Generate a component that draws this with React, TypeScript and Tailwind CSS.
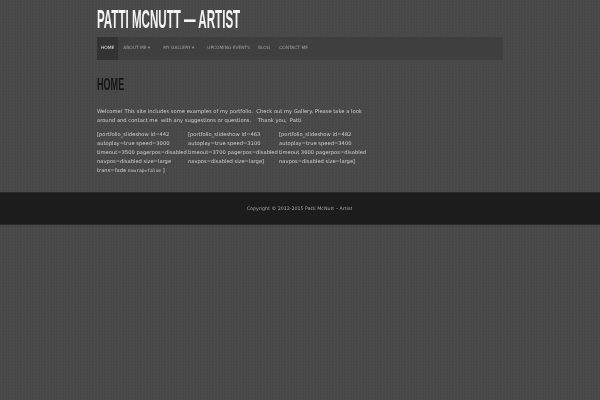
const cols = [
  ["[portfolio_slideshow id=442", "autoplay=true speed=3000", "timeout=3500 pagerpos=disabled", "navpos=disabled size=large"],
  ["[portfolio_slideshow id=463", "autoplay=true speed=3100", "timeout=3700 pagerpos=disabled", "navpos=disabled size=large]"],
  ["[portfolio_slideshow id=482", "autoplay=true speed=3400", "timeout 3600 pagerpos=disabled", "navpos=disabled size=large]"],
];

const nav = [
  { t: "HOME", c: "pl-[4px] pr-[4px]", active: true },
  { t: "ABOUT ME ▾", c: "ml-[5px] mr-[13px]" },
  { t: "MY GALLERY ▾", c: "mr-[13px]" },
  { t: "UPCOMING EVENTS", c: "mr-[8px]" },
  { t: "BLOG", c: "mr-[9px]" },
  { t: "CONTACT ME", c: "" },
];

export default function App() {
  return (
    <div className="h-[400px] w-[600px] overflow-hidden bg-[#484848] bg-[repeating-conic-gradient(#4b4b4b_0_25%,#464646_0_50%)] bg-[length:3px_3px] font-['DejaVu_Sans',sans-serif] text-[5.2px] text-[#d0d0d0]">
      <div className="mx-auto w-[406px] pt-[7px] blur-[0.25px]">
        <h1 className="h-[30px] origin-left scale-x-[0.463] whitespace-nowrap font-['Liberation_Sans',sans-serif] text-[25px] font-bold leading-[24px] text-[#f4f4f4]">
          PATTI MCNUTT — ARTIST
        </h1>
        <nav className="flex h-[23px] items-center bg-[#3f3f3f]">
          {nav.map((n) => (
            <a
              key={n.t}
              className={`flex h-full shrink-0 items-center whitespace-nowrap text-[4.4px] ${n.c} ${n.active ? "bg-[#333333] text-[#e4e4e4]" : "text-[#a0a0a0]"}`}
            >
              {n.t}
            </a>
          ))}
        </nav>
        <h2 className="mt-[16px] h-[16px] origin-left scale-x-[0.55] font-['Liberation_Sans',sans-serif] text-[16.5px] font-bold leading-[16px] text-[#151515]">
          HOME
        </h2>
        <p className="mt-[15px] w-[270px] leading-[9.3px]">
          Welcome! This site includes some examples of my portfolio.&nbsp; Check out my Gallery. Please take a look around and contact me&nbsp; with any suggestions or questions.&nbsp;&nbsp;&nbsp; Thank you,&nbsp; Patti
        </p>
        <div className="mt-[4px] flex leading-[9.2px]">
          {cols.map((c, i) => (
            <div key={i} className="w-[91px] shrink-0 whitespace-nowrap">
              {c.map((l) => (
                <div key={l}>{l}</div>
              ))}
              {i === 0 && (
                <div>
                  trans=fade <code className="font-['DejaVu_Sans_Mono',monospace] text-[4.6px]">nowrap=false</code> ]
                </div>
              )}
            </div>
          ))}
        </div>
      </div>
      <footer className="mt-[16px] flex h-[33px] items-center justify-center border-y border-y-[#2a2a2a] bg-[#1c1c1c] text-[4.75px] text-[#a8a8a8]">
        <span className="-ml-[1px] blur-[0.25px]">Copyright © 2012-2015 Patti McNutt – Artist</span>
      </footer>
    </div>
  );
}
